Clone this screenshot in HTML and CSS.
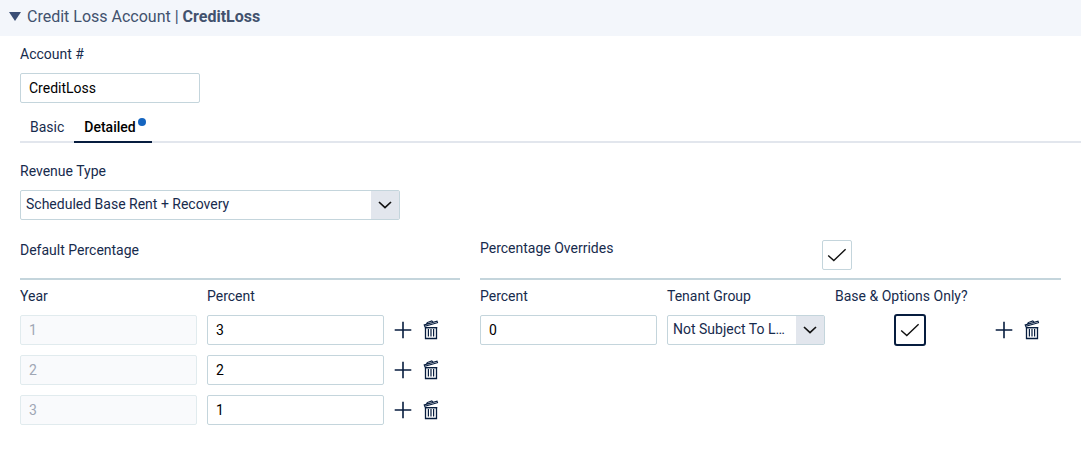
FILE: index.html
```html
<!DOCTYPE html>
<html lang="en">
<head>
    <meta charset="UTF-8">
    <meta name="viewport" content="width=device-width, initial-scale=1.0">
    <title>Credit Loss Account</title>
    <link rel="stylesheet" href="styles.css">
</head>
<body>
    <svg class="sprite" aria-hidden="true">
        <symbol id="plus" viewBox="0 0 18 18">
            <path d="M9 .7v16.6M.7 9h16.6" stroke-width="1.6"/>
        </symbol>
        <symbol id="trash" viewBox="0 0 16 20">
            <path d="M2.5 7.6h11v10.9h-11z" stroke-width="1.3"/>
            <path d="M1.8 7.6h12.4M5.4 9v7.5M8 9v7.5M10.6 9v7.5" stroke-width="1.2"/>
            <path d="M1.7 6.4L1.2 4.9L14 1.1L14.5 2.7zM4 4L4.2 2.6L8.8 .9L10 2.2" stroke-width="1.1"/>
        </symbol>
        <symbol id="chevron" viewBox="0 0 14 8">
            <path d="M1 1l6 5.6L13 1" stroke-width="1.7"/>
        </symbol>
        <symbol id="check" viewBox="0 0 20 14">
            <path d="M1.2 7.4l5.6 5.2L18.6 1.2" stroke-width="1.4"/>
        </symbol>
    </svg>

    <header class="panel-header">
        <span class="arrow"></span>
        <h1>Credit Loss Account | <b>CreditLoss</b></h1>
    </header>

    <main class="panel-body">
        <label class="label" for="account">Account #</label>
        <input class="field account" id="account" type="text" value="CreditLoss">

        <nav class="tabs">
            <a class="tab">Basic</a>
            <a class="tab active">Detailed<span class="dot"></span></a>
        </nav>

        <div class="label">Revenue Type</div>
        <div class="select revenue">
            <span class="select-text">Scheduled Base Rent + Recovery</span>
            <span class="select-btn"><svg class="chevron"><use href="#chevron"/></svg></span>
        </div>

        <div class="sections">
            <section class="defaults">
                <div class="section-head"><h2>Default Percentage</h2></div>
                <div class="row head">
                    <span>Year</span>
                    <span>Percent</span>
                </div>
                <div class="row">
                    <input class="field" type="text" value="1" disabled>
                    <input class="field" type="text" value="3">
                    <div class="actions">
                        <svg class="plus"><use href="#plus"/></svg>
                        <svg class="trash"><use href="#trash"/></svg>
                    </div>
                </div>
                <div class="row">
                    <input class="field" type="text" value="2" disabled>
                    <input class="field" type="text" value="2">
                    <div class="actions">
                        <svg class="plus"><use href="#plus"/></svg>
                        <svg class="trash"><use href="#trash"/></svg>
                    </div>
                </div>
                <div class="row">
                    <input class="field" type="text" value="3" disabled>
                    <input class="field" type="text" value="1">
                    <div class="actions">
                        <svg class="plus"><use href="#plus"/></svg>
                        <svg class="trash"><use href="#trash"/></svg>
                    </div>
                </div>
            </section>

            <section class="overrides">
                <div class="section-head">
                    <h2>Percentage Overrides</h2>
                    <span class="checkbox"><svg class="check"><use href="#check"/></svg></span>
                </div>
                <div class="row head">
                    <span>Percent</span>
                    <span>Tenant Group</span>
                    <span>Base &amp; Options Only?</span>
                </div>
                <div class="row">
                    <input class="field" type="text" value="0">
                    <div class="select">
                        <span class="select-text">Not Subject To L…</span>
                        <span class="select-btn"><svg class="chevron"><use href="#chevron"/></svg></span>
                    </div>
                    <span class="checkbox focused"><svg class="check"><use href="#check"/></svg></span>
                    <div class="actions">
                        <svg class="plus"><use href="#plus"/></svg>
                        <svg class="trash"><use href="#trash"/></svg>
                    </div>
                </div>
            </section>
        </div>
    </main>
</body>
</html>
```

FILE: styles.css
```css
:root {
    --navy: #071d3f;
    --title: #42526e;
    --border: #c4d5dc;
    --line: #e2e6ed;
    --blue: #1565c0;
}

* {
    box-sizing: border-box;
}

body {
    margin: 0;
    background: #fff;
    color: #172b4d;
    font-family: Roboto, "Liberation Sans", sans-serif;
    font-size: 14px;
    line-height: 20px;
    overflow: hidden;
}

.sprite {
    display: none;
}

svg {
    display: block;
    fill: none;
    stroke: var(--navy);
}

/* Header */
.panel-header {
    display: flex;
    align-items: center;
    height: 36px;
    padding: 0 0 3px 9px;
    background: #f3f6fb;
    color: var(--title);
}

.panel-header h1 {
    margin: 0 0 0 6px;
    font-size: 16px;
    font-weight: 400;
}

.panel-header b {
    font-weight: 700;
}

.arrow {
    border: solid transparent;
    border-width: 9px 6px 0;
    border-top-color: #3b4f76;
}

/* Fields */
.panel-body {
    padding: 8px 0 0 20px;
}

.label {
    display: block;
    height: 29px;
}

.field {
    display: block;
    min-width: 0;
    height: 30px;
    padding: 0 8px;
    border: 1px solid var(--border);
    border-radius: 2px;
    background: #fff;
    color: #000;
    font: inherit;
}

.field:disabled {
    border-color: #e1ebee;
    background: #f9fafc;
    color: #a0a7b5;
}

.account {
    width: 180px;
}

.select {
    display: flex;
    height: 30px;
    border: 1px solid var(--border);
    border-radius: 2px;
}

.select-text {
    flex: 1;
    padding: 3px 0 0 5px;
    white-space: nowrap;
}

.select-btn {
    display: flex;
    align-items: center;
    justify-content: center;
    width: 28px;
    background: var(--line);
}

.chevron {
    width: 14px;
    height: 8px;
    stroke: #111;
}

.revenue {
    width: 380px;
}

.checkbox {
    display: flex;
    align-items: center;
    justify-content: center;
    width: 30px;
    height: 30px;
    border: 1px solid var(--border);
    border-radius: 2px;
}

.checkbox.focused {
    width: 32px;
    height: 32px;
    border: 2px solid var(--navy);
    border-radius: 3px;
}

.check {
    width: 20px;
    height: 14px;
    stroke: #111;
}

/* Tabs */
.tabs {
    display: flex;
    height: 30px;
    margin: 10px 0 18px;
    box-shadow: inset 0 -2px var(--line);
}

.tab {
    padding: 4px 10px 0;
}

.tab.active {
    display: flex;
    width: 78px;
    padding-right: 0;
    border-bottom: 2px solid var(--navy);
    color: #000;
    font-weight: 500;
}

.dot {
    flex: none;
    width: 8px;
    height: 8px;
    margin: 1px 0 0 2px;
    border-radius: 50%;
    background: var(--blue);
}

/* Percentage tables */
.sections {
    display: flex;
    gap: 20px;
    margin-top: 20px;
}

.defaults {
    width: 440px;
}

.overrides {
    width: 581px;
}

.section-head {
    display: flex;
    height: 40px;
    border-bottom: 2px solid var(--border);
}

.section-head h2 {
    width: 342px;
    margin: 0;
    font-size: 14px;
    font-weight: 400;
}

.overrides h2 {
    margin-top: -2px;
}

.row {
    display: grid;
    grid-template-columns: 177px 177px 1fr;
    grid-template-rows: 100%;
    column-gap: 10px;
    align-items: center;
    height: 30px;
    margin-bottom: 10px;
}

.overrides .row {
    grid-template-columns: 177px 158px 150px 1fr;
}

.row.head {
    height: 20px;
    margin: 6px 0 9px;
}

.row .checkbox {
    margin: -1px 0 -1px 59px;
}

.actions {
    display: flex;
    align-items: center;
    gap: 11px;
}

.plus {
    width: 18px;
    height: 18px;
}

.trash {
    width: 16px;
    height: 20px;
}
```
